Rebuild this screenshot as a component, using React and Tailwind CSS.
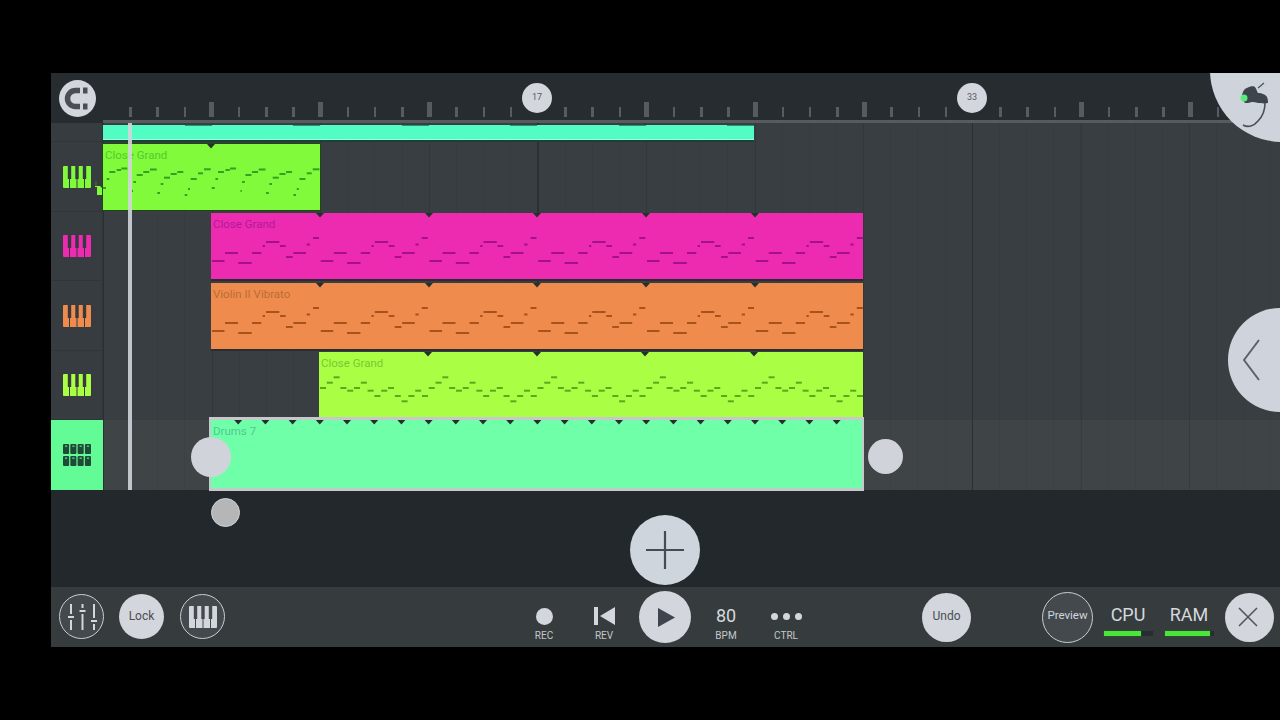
import React from 'react';

const PERIOD = 108.75;

const greenNotes = [
  [0, 3, 44], [3.7, 6.3, 35], [6.3, 12.3, 28], [13.7, 18, 26], [18.3, 24.3, 24.5],
  [28.7, 30, 47], [30.3, 33, 38], [33.7, 39.7, 31], [40.3, 46.3, 28], [47, 53.7, 25.5],
  [54.3, 57, 49], [57.7, 60.3, 40], [61, 67, 33.7], [67.7, 73.7, 30], [74.3, 80.3, 28],
  [81.7, 84.3, 51], [85, 87, 45], [87.7, 93.7, 35], [95, 100, 29.3], [101, 107.7, 25.3],
];

const stringNotes = [
  [1, 13.5, 48], [14, 27, 40], [27.3, 40.7, 50], [41, 50.3, 40], [51.7, 54, 33], [55, 68.3, 29],
  [69, 74.7, 33], [75, 81.7, 44], [82.3, 95, 40], [95.7, 99, 31.5], [102, 108, 25],
];

const limeNotes = [36, 30.7, 25.3, 36, 38.7, 36, 30.7, 38.7, 44, 38.7, 36, 44, 49.3, 44, 38.7, 44].map((y, i) => [
  i * 6.8 + 1,
  i * 6.8 + 7,
  y,
]);

function Clip({ width, height, top, color, label, labelColor, noteColor, notes, ticks = [] }) {
  const lines = [];
  if (notes) {
    for (let p = 0; p * PERIOD < width; p++) {
      notes.forEach((n) => {
        const x1 = n[0] + p * PERIOD;
        if (x1 < width - 1) lines.push([x1, Math.min(n[1] + p * PERIOD, width), n[2]]);
      });
    }
  }
  return (
    <div className={`relative shrink-0 ${top} ${color}`} style={{ width, height }}>
      <span className={`absolute left-[2px] top-[3px] text-[11.5px] leading-[16px] whitespace-nowrap ${labelColor}`}>{label}</span>
      <svg className="absolute left-0 top-0" width={width} height={height}>
        {lines.map((l, i) => (
          <rect key={i} x={l[0]} y={l[2] - 1} width={l[1] - l[0]} height="2" fill={noteColor} />
        ))}
        {ticks.map((x) => (
          <polygon key={x} points={`${x - 4},0 ${x + 4},0 ${x},4.5`} fill="#23302c" />
        ))}
      </svg>
    </div>
  );
}

function PianoIcon({ color, gap = '#343a3d' }) {
  return (
    <svg width="28" height="22" viewBox="0 0 28 22">
      <rect width="28" height="22" rx="1" fill={color} />
      <rect x="4.8" y="0" width="3.4" height="13" fill={gap} />
      <rect x="12.3" y="0" width="3.4" height="13" fill={gap} />
      <rect x="19.8" y="0" width="3.4" height="13" fill={gap} />
      <rect x="6" y="13" width="1" height="9" fill={gap} />
      <rect x="13.5" y="13" width="1" height="9" fill={gap} />
      <rect x="21" y="13" width="1" height="9" fill={gap} />
    </svg>
  );
}

function PadsIcon() {
  const pads = [0, 7.3, 14.6, 21.9];
  return (
    <svg width="28" height="22" viewBox="0 0 28 22">
      {[0, 12].map((y) =>
        pads.map((x) => (
          <g key={`${x}-${y}`}>
            <rect x={x} y={y} width="6.1" height="10" rx="1" fill="#1f4a35" />
            <rect x={x + 2} y={y + 1.5} width="2.2" height="1.4" fill="#5cc98a" />
          </g>
        )),
      )}
    </svg>
  );
}

function TrackHead({ children, height, active }) {
  return (
    <div
      className={`flex w-[52px] shrink-0 items-center justify-center ${active ? 'bg-[#62fb95]' : 'border-r border-b border-[#2f3538] bg-[#363c3f]'}`}
      style={{ height }}
    >
      {children}
    </div>
  );
}

const grid =
  'bg-[#383e41] bg-[repeating-linear-gradient(90deg,#2a2f32_0,#2a2f32_1.5px,transparent_1.5px,transparent_434.5px),repeating-linear-gradient(90deg,#31373a_0,#31373a_1px,transparent_1px,transparent_108.62px),repeating-linear-gradient(90deg,#353b3e_0,#353b3e_1px,transparent_1px,transparent_27.15px)]';

const activeGrid =
  'bg-[#3f4447] bg-[repeating-linear-gradient(90deg,#2a2f32_0,#2a2f32_1.5px,transparent_1.5px,transparent_434.5px),repeating-linear-gradient(90deg,#373c3f_0,#373c3f_1px,transparent_1px,transparent_108.62px),repeating-linear-gradient(90deg,#3c4144_0,#3c4144_1px,transparent_1px,transparent_27.15px)]';

function Track({ head, height, active, pad, children }) {
  return (
    <div className="flex shrink-0" style={{ height }}>
      <TrackHead height={height} active={active}>
        {head}
      </TrackHead>
      <div className={`flex flex-1 ${active ? activeGrid : grid}`} style={{ paddingLeft: pad }}>
        {children}
      </div>
    </div>
  );
}

function Transport({ label, children }) {
  return (
    <div className="flex w-[60px] shrink-0 flex-col items-center">
      <div className="flex h-[42px] items-center justify-center pt-[16px]">{children}</div>
      <span className="text-[10px] leading-[14px] text-[#c3c7cb]">{label}</span>
    </div>
  );
}

function Meter({ label, fill }) {
  return (
    <div className="flex w-[60px] shrink-0 flex-col items-center">
      <span className="mt-[15px] text-[18px] leading-[26px] text-[#d5d8dd]">{label}</span>
      <div className="mt-[3px] h-[5px] w-[49px] bg-[#262c2f]">
        <div className="h-[5px] bg-[#4ae63c] shadow-[0_0_2px_#1c7a18]" style={{ width: fill }} />
      </div>
    </div>
  );
}

export default function App() {
  const ticks = Array.from({ length: 42 }, (_, i) => i + 1);
  const drumTicks = Array.from({ length: 23 }, (_, i) => 27.2 * (i + 1));

  return (
    <div className="h-[720px] w-[1280px] overflow-hidden bg-black pl-[51px] pt-[73px] font-['Roboto',sans-serif]">
      <div className="relative flex h-[574px] w-[1229px] flex-col overflow-hidden bg-[#22282b]">
        {/* ruler */}
        <div className="relative h-[50px] shrink-0 bg-[#262c2f]">
          <div className="flex h-[47px]">
            <div className="ml-[8px] mt-[7px] flex h-[37px] w-[37px] shrink-0 items-center justify-center rounded-full bg-[#d3d6dc]">
              <svg width="37" height="37" viewBox="0 0 37 37">
                <path d="M21 10.5H16.5a8 8 0 0 0 0 16H21" fill="none" stroke="#4a4f53" strokeWidth="5.5" />
                <rect x="24" y="7.5" width="4.5" height="6" fill="#4a4f53" />
                <rect x="24" y="23.5" width="4.5" height="6" fill="#4a4f53" />
              </svg>
            </div>
            <div className="ml-[20.8px] flex items-end pb-[3px]">
              {ticks.map((k) => (
                <div key={k} className="flex w-[27.19px] shrink-0 justify-center">
                  {k === 16 || k === 32 ? null : k % 4 === 0 ? (
                    <div className="h-[15px] w-[5px] bg-[#555b5e]" />
                  ) : (
                    <div className="h-[10px] w-[2.5px] bg-[#565c5f]" />
                  )}
                </div>
              ))}
            </div>
          </div>
          <div className="ml-[52px] h-[3px] bg-[#565b5e]" />
          <div className="absolute left-[471px] top-[10px] flex h-[30px] w-[30px] items-center justify-center rounded-full bg-[#d3d6dc] text-[9px] text-[#565b60]">
            17
          </div>
          <div className="absolute left-[906px] top-[10px] flex h-[30px] w-[30px] items-center justify-center rounded-full bg-[#d3d6dc] text-[9px] text-[#565b60]">
            33
          </div>
        </div>

        {/* tracks */}
        <div className="relative flex shrink-0 flex-col">
          <Track height={19} pad={0}>
            <div className="mt-[2px] h-[18px] w-[651px] border-b-[3px] border-[#1c3f36] bg-[#52fdc3]">
              <div className="flex h-[1px]">
                {[0, 1, 2, 3, 4, 5].map((p) => (
                  <div key={p} className="ml-[81.5px] h-[1px] w-[27.2px] bg-[#2c8f70]" />
                ))}
              </div>
              <div className="mt-[13px] h-[1px] bg-[#9dfde0]" />
            </div>
          </Track>
          <Track height={70} pad={0} head={<PianoIcon color="#80fa3a" />}>
            <Clip
              width={217}
              height={66}
              top="mt-[2px]"
              color="bg-[#80fa3a] shadow-[0_0_0_1px_#1d4a12]"
              label="Close Grand"
              labelColor="text-[#54cb2d]"
              noteColor="#35a021"
              notes={greenNotes}
              ticks={[108]}
            />
          </Track>
          <Track height={69} pad={108} head={<PianoIcon color="#ec2bb0" />}>
            <Clip
              width={652}
              height={66}
              top="mt-[1px]"
              color="bg-[#ec2bb0] shadow-[0_2px_0_#2b2c30]"
              label="Close Grand"
              labelColor="text-[#b21a98]"
              noteColor="#a5108c"
              notes={stringNotes}
              ticks={[109, 218, 326, 435, 544]}
            />
          </Track>
          <Track height={70} pad={108} head={<PianoIcon color="#ef8c4d" />}>
            <Clip
              width={652}
              height={66}
              top="mt-[2px]"
              color="bg-[#ef8c4d] shadow-[0_2px_0_#2b2c30]"
              label="Violin II Vibrato"
              labelColor="text-[#b96c36]"
              noteColor="#a8521c"
              notes={stringNotes}
              ticks={[109, 218, 326, 435, 544]}
            />
          </Track>
          <Track height={69} pad={216} head={<PianoIcon color="#aaff44" />}>
            <Clip
              width={544}
              height={65}
              top="mt-[1px]"
              color="bg-[#aaff44]"
              label="Close Grand"
              labelColor="text-[#7cc832]"
              noteColor="#5da81e"
              notes={limeNotes}
              ticks={[109, 218, 326, 435]}
            />
          </Track>
          <Track height={70} pad={106} active head={<PadsIcon />}>
            <Clip
              width={655}
              height={74}
              top="-mt-[3px] z-10 border-y-[3px] border-x-2 border-[#c6c9cc]"
              color="bg-[#6fffa8]"
              label="Drums 7"
              labelColor="text-[#50c98f]"
              ticks={drumTicks}
            />
          </Track>

          {/* playhead */}
          <div className="absolute bottom-0 left-[76.5px] top-0 z-20 w-[4px] bg-[#d0d5da]/90" />
          {/* clip handles */}
          <div className="absolute left-[140px] top-[314px] z-30 h-[40px] w-[40px] rounded-full bg-[#d0d3da]" />
          <div className="absolute left-[817px] top-[316px] z-30 h-[35px] w-[35px] rounded-full bg-[#d0d3da]" />
          <div className="absolute left-[160px] top-[375px] z-30 h-[29px] w-[29px] rounded-full border border-[#cfd2d6] bg-[#b4b6b8]" />
          {/* finger mark */}
          <svg className="absolute left-[44px] top-[58px] z-20" width="7" height="14" viewBox="0 0 7 14">
            <path d="M0 0h2v5h3l2 2v7H2V6H0z" fill="#80fa3a" />
            <path d="M0 0h2v5H0z" fill="#3c5c34" />
          </svg>
        </div>

        {/* add area */}
        <div className="flex h-[97px] shrink-0 pl-[579px] pt-[25px]">
          <button className="z-10 flex h-[70px] w-[70px] items-center justify-center rounded-full bg-[#cfd5dd]">
            <svg width="40" height="40" viewBox="0 0 40 40">
              <path d="M20 1v38M1 20h38" stroke="#454b52" strokeWidth="2.2" />
            </svg>
          </button>
        </div>

        {/* transport bar */}
        <div className="flex h-[60px] shrink-0 bg-[#363c3e] pl-[8px]">
          <div className="mt-[7px] flex h-[45px] w-[45px] shrink-0 items-center justify-center rounded-full border border-[#c9cdd1] bg-[#43494c]">
            <svg width="30" height="28" viewBox="0 0 30 28">
              <g stroke="#d3d6dc" strokeWidth="2">
                <path d="M4 1v10M4 17v10M15.5 1v4M15.5 11v16M27 1v14M27 21v6" />
                <path d="M1 14h6M12.5 8h6M24 18h6" />
              </g>
            </svg>
          </div>
          <button className="ml-[15px] mt-[7px] h-[45px] w-[45px] shrink-0 rounded-full bg-[#d3d6dc] pb-[1px] text-[12px] text-[#4a4f55]">Lock</button>
          <div className="ml-[16px] mt-[7px] flex h-[45px] w-[45px] shrink-0 items-center justify-center rounded-full border border-[#c9cdd1] bg-[#43494c]">
            <PianoIcon color="#d3d6dc" gap="#43494c" />
          </div>
          <div className="ml-[289px] flex">
            <Transport label="REC">
              <div className="h-[17px] w-[17px] rounded-full bg-[#d3d6dc]" />
            </Transport>
            <Transport label="REV">
              <svg width="21" height="18" viewBox="0 0 21 18">
                <path d="M0 0h4v18H0zM21 0v18L6 9z" fill="#d3d6dc" />
              </svg>
            </Transport>
            <button className="ml-[5px] mt-[4px] flex h-[52px] w-[52px] shrink-0 items-center justify-center rounded-full bg-[#d3d6dc]">
              <svg className="ml-[2px]" width="17" height="19" viewBox="0 0 17 19">
                <path d="M0 0l17 9.5L0 19z" fill="#3f454c" />
              </svg>
            </button>
            <div className="ml-[5px] flex w-[60px] shrink-0 flex-col items-center">
              <span className="mt-[15px] text-[18px] leading-[27px] text-[#d5d8dd]">80</span>
              <span className="text-[10px] leading-[14px] text-[#c3c7cb]">BPM</span>
            </div>
            <Transport label="CTRL">
              <div className="flex gap-[5px]">
                <div className="h-[7px] w-[7px] rounded-full bg-[#d3d6dc]" />
                <div className="h-[7px] w-[7px] rounded-full bg-[#d3d6dc]" />
                <div className="h-[7px] w-[7px] rounded-full bg-[#d3d6dc]" />
              </div>
            </Transport>
          </div>
          <button className="ml-[106px] mt-[6px] h-[49px] w-[49px] shrink-0 rounded-full bg-[#d3d6dc] pb-[3px] text-[12px] text-[#4a4f55]">Undo</button>
          <div className="ml-[71px] mt-[5px] flex h-[51px] w-[51px] shrink-0 items-center justify-center rounded-full border border-[#c9cdd1] bg-[#43494c] pb-[3px] text-[11.5px] text-[#d3d6dc]">
            Preview
          </div>
          <div className="ml-[5px] flex">
            <Meter label="CPU" fill={37} />
          </div>
          <div className="ml-[1px] flex">
            <Meter label="RAM" fill={45} />
          </div>
          <button className="ml-[6px] mt-[6px] flex h-[49px] w-[49px] shrink-0 items-center justify-center rounded-full bg-[#d3d6dc] pr-[3px] pb-[2px]">
            <svg width="20" height="20" viewBox="0 0 20 20">
              <path d="M1 1l18 18M19 1L1 19" stroke="#50565c" strokeWidth="1.6" />
            </svg>
          </button>
        </div>

        {/* side tab */}
        <div className="absolute right-[-52px] top-[235px] z-30 flex h-[104px] w-[104px] items-center rounded-full bg-[#cfd3dc] pl-[15px]">
          <svg width="18" height="42" viewBox="0 0 18 42">
            <path d="M16 1L1 21l15 20" fill="none" stroke="#5b6166" strokeWidth="2" />
          </svg>
        </div>

        {/* app logo */}
        <div className="absolute right-[-74px] top-[-75px] z-30 h-[144px] w-[144px] rounded-full bg-[#cfd3dc]">
          <svg className="absolute left-[28px] top-[82px]" width="34" height="50" viewBox="0 0 34 50">
            <path d="M4 15C5 11 7 8 9 8 12 6 16 6 17 7 19 10 19 12 20 13 24 13 28 15 29 17 30 19 30 22 30 23 26 24 22 23 20 23 18 22 15 22 14 22 11 23 9 23 7 23 5 21 4 18 4 15z" fill="#3f454c" />
            <path d="M20 8l6-5" fill="none" stroke="#4a5056" strokeWidth="1.2" />
            <path d="M27 23C27 30 25 36 20 41 16 46 10 48 5 45" fill="none" stroke="#4a5056" strokeWidth="1.6" />
            <circle cx="6" cy="18" r="3.5" fill="#54f07a" />
          </svg>
        </div>
      </div>
    </div>
  );
}
